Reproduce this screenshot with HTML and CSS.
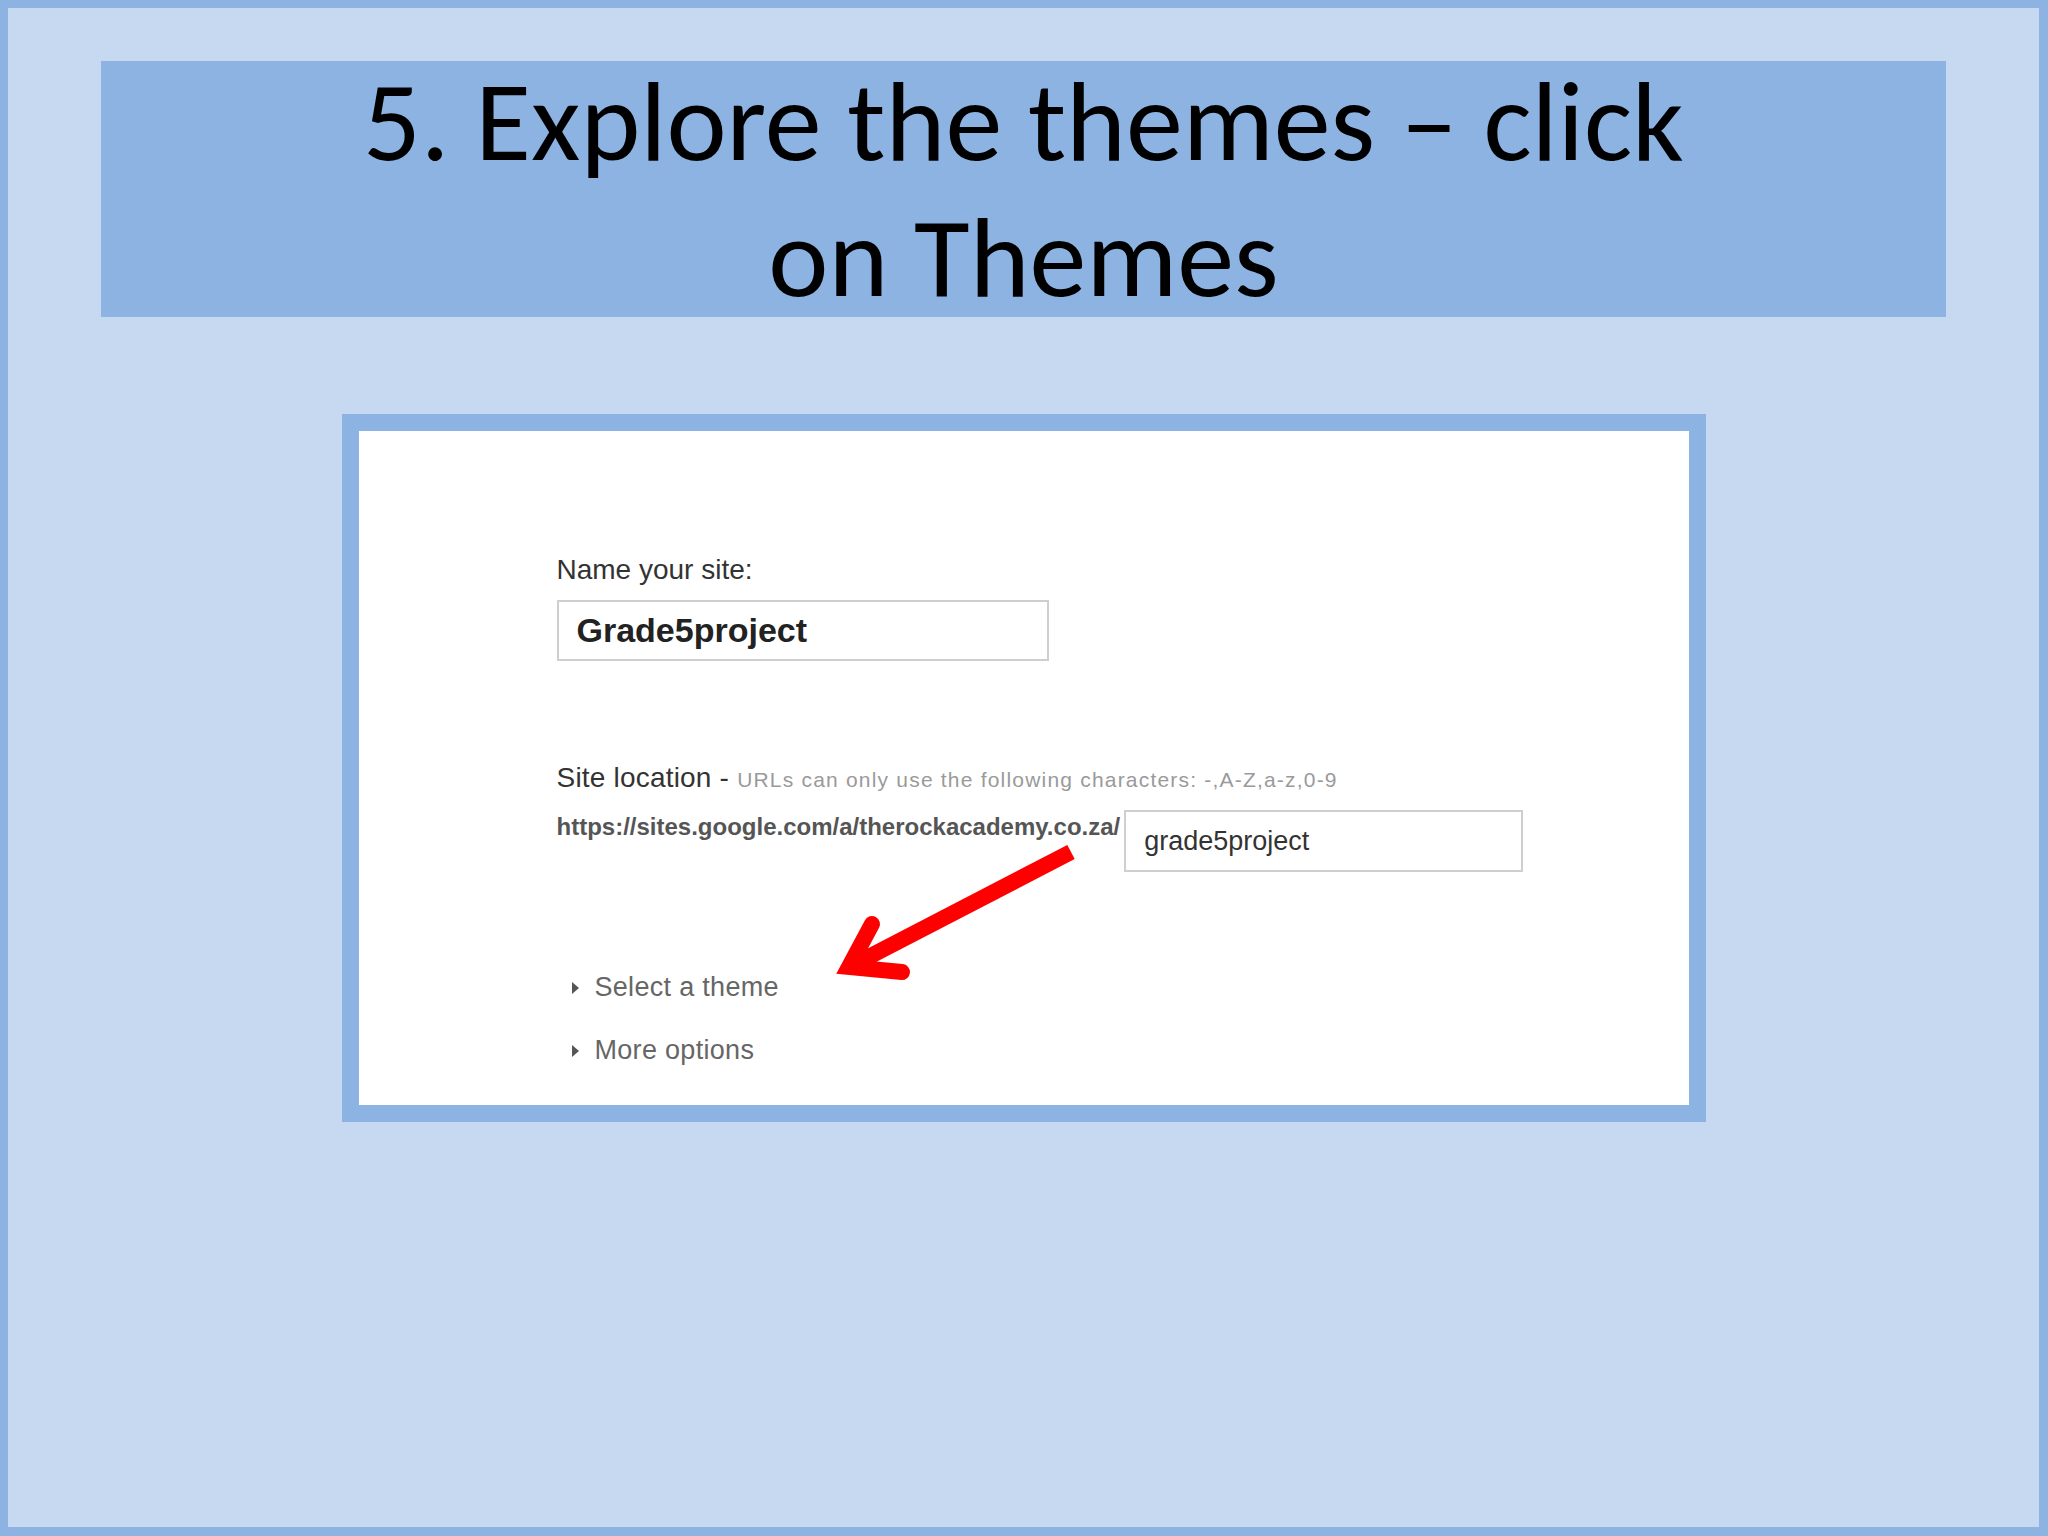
FILE: index.html
```html
<!DOCTYPE html>
<html lang="en">
<head>
  <meta charset="UTF-8" />
  <meta name="viewport" content="width=device-width, initial-scale=1.0" />
  <title>5. Explore the themes</title>
  <link rel="stylesheet" href="styles.css">
</head>
<body>

  <div class="slide">
    <div class="title-band">
      <h1>5. Explore the themes – click<br>on Themes</h1>
    </div>

    <div class="shot-frame">
      <div class="shot">
        <div class="field-label">Name your site:</div>
        <div class="name-box">Grade5project</div>

        <div class="location-label">
          Site location - <span class="hint">URLs can only use the following characters: -,A-Z,a-z,0-9</span>
        </div>
        <div class="url-row">
          <span class="url-prefix">https://sites.google.com/a/therockacademy.co.za/</span>
          <div class="url-box">grade5project</div>
        </div>

        <div class="option first"><span class="caret"></span>Select a theme</div>
        <div class="option"><span class="caret"></span>More options</div>

        <!-- red pointer drawn over the form -->
        <svg class="pointer" width="1329" height="674" viewBox="0 0 1329 674">
          <line x1="712" y1="421" x2="496" y2="533" stroke="#ff0000" stroke-width="16" />
          <polyline points="513,493 490,536 543,541" fill="none" stroke="#ff0000" stroke-width="16"
                    stroke-linecap="round" stroke-linejoin="miter" stroke-miterlimit="10" />
        </svg>
      </div>
    </div>
  </div>

</body>
</html>
```

FILE: styles.css
```css
body {
  margin: 0;
  padding: 0;
  background-color: #c6d9f1;
}

.slide {
  width: 2048px;
  height: 1536px;
  box-sizing: border-box;
  border: 8px solid #8db3e2;
  border-right-width: 9px;
  border-bottom-width: 9px;
  background-color: #c6d9f1;
  overflow: hidden;
}

.title-band {
  margin: 53px 93px 0 93px;
  height: 256px;
  background-color: #8db3e2;
  text-align: center;
}

.title-band h1 {
  margin: 0;
  position: relative;
  top: -8px;
  font-family: Carlito, "Open Sans", sans-serif;
  font-weight: normal;
  font-size: 114px;
  line-height: 136px;
  color: #000;
}

.shot-frame {
  width: 1364px;
  height: 708px;
  box-sizing: border-box;
  margin: 97px auto 0 auto;
  border: 17px solid #8db3e2;
  background-color: #fff;
}

.shot {
  position: relative;
  height: 100%;
  box-sizing: border-box;
  padding: 123px 0 0 198px;
  font-family: "Liberation Sans", Arial, sans-serif;
  color: #333;
}

.field-label {
  font-size: 28px;
  line-height: 31px;
  color: #333;
}

.name-box {
  width: 492px;
  height: 61px;
  box-sizing: border-box;
  margin-top: 15px;
  padding-left: 18px;
  border: 2px solid #cfcfcf;
  display: flex;
  align-items: center;
  font-size: 34px;
  font-weight: bold;
  color: #222;
}

.location-label {
  margin-top: 101px;
  font-size: 28px;
  line-height: 31px;
  letter-spacing: 0.2px;
  color: #333;
}

.hint {
  font-size: 21px;
  letter-spacing: 1.2px;
  color: #9a9a9a;
}

.url-row {
  display: flex;
  align-items: flex-start;
  margin-top: 15px;
}

.url-prefix {
  margin-top: 2px;
  margin-right: 4px;
  font-size: 24px;
  line-height: 30px;
  font-weight: bold;
  color: #555;
}

.url-box {
  width: 399px;
  height: 62px;
  box-sizing: border-box;
  padding-left: 18px;
  border: 2px solid #cfcfcf;
  display: flex;
  align-items: center;
  font-size: 27px;
  color: #333;
}

.option {
  display: flex;
  align-items: center;
  font-size: 27px;
  line-height: 31px;
  letter-spacing: 0.3px;
  color: #666;
  margin-top: 32px;
}

.option.first {
  margin-top: 100px;
}

.caret {
  width: 0;
  height: 0;
  margin: 0 16px 0 15px;
  border-top: 6px solid transparent;
  border-bottom: 6px solid transparent;
  border-left: 7px solid #555;
}

.pointer {
  position: absolute;
  left: 0;
  top: 0;
  pointer-events: none;
}
```
